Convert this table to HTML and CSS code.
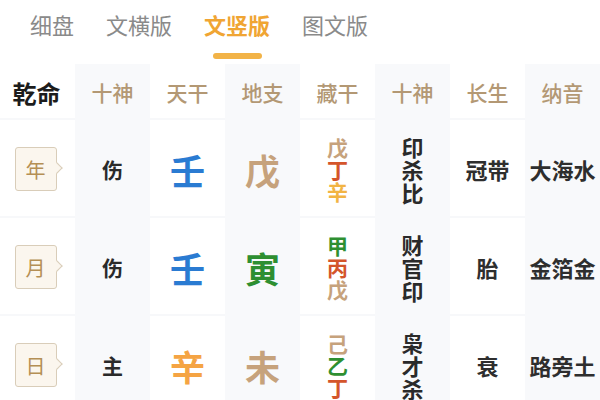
FILE: index.html
```html
<!DOCTYPE html>
<html lang="zh">
<head>
<meta charset="utf-8">
<link rel="stylesheet" href="styles.css">
</head>
<body>
<div class="tabs">
  <div class="tab">细盘</div>
  <div class="tab">文横版</div>
  <div class="tab active">文竖版</div>
  <div class="tab">图文版</div>
</div>
<div class="grid">
  <div class="cell w title">乾命</div>
  <div class="cell g head">十神</div>
  <div class="cell w head">天干</div>
  <div class="cell g head">地支</div>
  <div class="cell w head">藏干</div>
  <div class="cell g head">十神</div>
  <div class="cell w head">长生</div>
  <div class="cell g head">纳音</div>

  <div class="cell w"><span class="pillar">年</span></div>
  <div class="cell g god">伤</div>
  <div class="cell w big blue">壬</div>
  <div class="cell g big tan">戊</div>
  <div class="cell w stack"><span class="tan">戊</span><span class="red">丁</span><span class="yellow">辛</span></div>
  <div class="cell g stack dark"><span>印</span><span>杀</span><span>比</span></div>
  <div class="cell w txt">冠带</div>
  <div class="cell g txt">大海水</div>

  <div class="cell w"><span class="pillar">月</span></div>
  <div class="cell g god">伤</div>
  <div class="cell w big blue">壬</div>
  <div class="cell g big green">寅</div>
  <div class="cell w stack"><span class="green">甲</span><span class="red">丙</span><span class="tan">戊</span></div>
  <div class="cell g stack dark"><span>财</span><span>官</span><span>印</span></div>
  <div class="cell w txt">胎</div>
  <div class="cell g txt">金箔金</div>

  <div class="cell w"><span class="pillar">日</span></div>
  <div class="cell g god">主</div>
  <div class="cell w big orange">辛</div>
  <div class="cell g big tan">未</div>
  <div class="cell w stack"><span class="tan">己</span><span class="green">乙</span><span class="red">丁</span></div>
  <div class="cell g stack dark"><span>枭</span><span>才</span><span>杀</span></div>
  <div class="cell w txt">衰</div>
  <div class="cell g txt">路旁土</div>
</div>
</body>
</html>
```

FILE: styles.css
```css
* { box-sizing: border-box; }
html, body {
  margin: 0;
  padding: 0;
  background: #ffffff;
  font-family: "Noto Sans CJK SC", "Noto Sans", sans-serif;
  overflow: hidden;
}
.tabs {
  height: 64px;
  display: flex;
  gap: 32px;
  padding: 9px 0 0 30px;
  background: #fff;
}
.tab {
  font-size: 22px;
  line-height: 30px;
  color: #8a8a8a;
  position: relative;
  height: 55px;
}
.tab.active {
  color: #f0a533;
  font-weight: 700;
}
.tab.active::after {
  content: "";
  position: absolute;
  left: 9px;
  right: 8px;
  top: 44px;
  height: 6px;
  border-radius: 3px;
  background: #f2b347;
}
.grid {
  display: grid;
  grid-template-columns: repeat(8, 75px);
  grid-template-rows: 56px repeat(3, 98px);
}
.cell {
  display: flex;
  align-items: center;
  justify-content: center;
  font-weight: 700;
  color: #2b2b2b;
}
.cell.g { background: #f8f9fb; }
.cell.w { background: #ffffff; box-shadow: inset 0 -2px 0 #f7f8fa; }
.title {
  font-size: 24px;
  color: #1c1c1c;
  font-weight: 700;
  padding-right: 2px;
}
.head {
  font-size: 21px;
  font-weight: 500;
  color: #b39874;
}
.pillar {
  position: relative;
  width: 42px;
  height: 44px;
  margin-right: 4px;
  border: 1.5px solid #d9cdb9;
  border-radius: 3px;
  background: #fbf6ee;
  color: #b58f55;
  font-size: 20px;
  font-weight: 400;
  display: flex;
  align-items: center;
  justify-content: center;
}
.pillar::after {
  content: "";
  position: absolute;
  right: -5px;
  top: 16px;
  width: 7px;
  height: 7px;
  background: #fbf6ee;
  border-top: 1.5px solid #d9cdb9;
  border-right: 1.5px solid #d9cdb9;
  transform: rotate(45deg);
}
.god { font-size: 21px; color: #2a2a2a; }
.big { font-size: 35px; font-weight: 700; }
.blue { color: #2a7bd2; }
.tan { color: #c6a27c; }
.green { color: #2e8f31; }
.orange { color: #f5a443; }
.red { color: #d4552b; }
.yellow { color: #f2b444; }
.stack {
  flex-direction: column;
  font-size: 21px;
  line-height: 22px;
}
.stack.dark {
  font-size: 22px;
  line-height: 23px;
  color: #2a2a2a;
}
.txt {
  font-size: 22px;
  color: #2e2e2e;
  font-weight: 700;
}
```
